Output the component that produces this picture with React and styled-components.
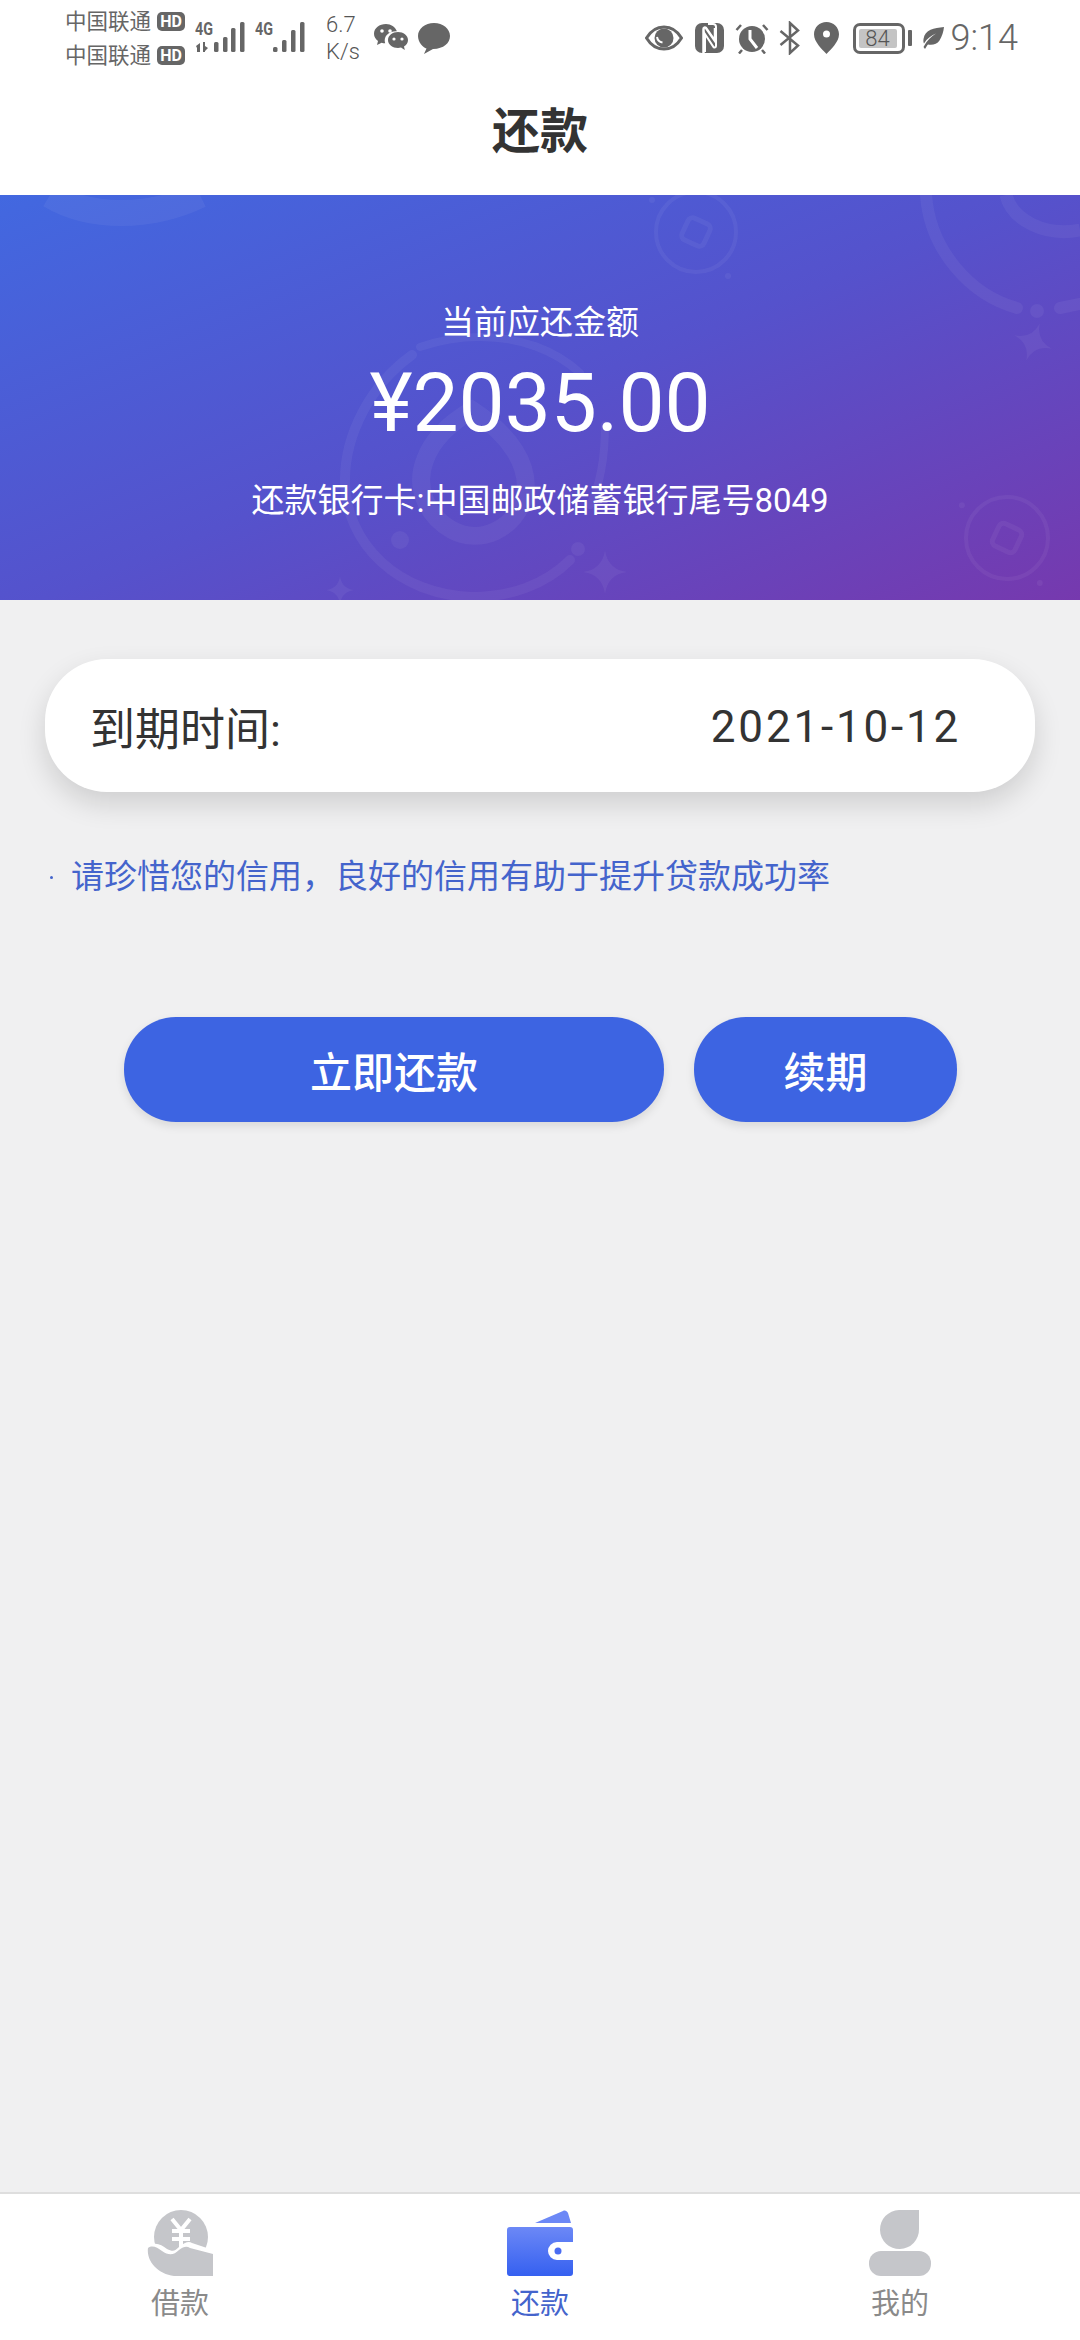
import React from 'react';
import styled, { createGlobalStyle } from 'styled-components';

const GlobalStyle = createGlobalStyle`
  html, body {
    margin: 0;
    padding: 0;
    background: #f0f0f1;
  }
  * {
    box-sizing: border-box;
  }
`;

const FONT = `Roboto, "Noto Sans CJK SC", sans-serif`;
const BLUE = '#3d64e2';
const GREY = '#666666';

const Page = styled.div`
  display: flex;
  flex-direction: column;
  width: 1080px;
  height: 2340px;
  font-family: ${FONT};
  background: #f0f0f1;
  overflow: hidden;
`;

const Header = styled.header`
  display: flex;
  flex-direction: column;
  height: 195px;
  background: #fff;
`;

const StatusBar = styled.div`
  display: flex;
  justify-content: space-between;
  align-items: center;
  height: 76px;
  padding: 0 62px 0 65px;
  color: ${GREY};
`;

const StatusGroup = styled.div`
  display: flex;
  align-items: center;
`;

const Carriers = styled.div`
  display: flex;
  flex-direction: column;
  gap: 13px;
  margin: 0 10px 0 0;
`;

const Carrier = styled.div`
  display: flex;
  align-items: center;
  gap: 6px;
  height: 21px;
  font-size: 21.5px;
  line-height: 21px;
`;

const HdBadge = styled.span`
  display: inline-flex;
  justify-content: center;
  align-items: center;
  width: 28px;
  height: 19px;
  border-radius: 5px;
  font-size: 16px;
  font-weight: 700;
  line-height: 19px;
  color: #fff;
  background: ${GREY};
`;

const Speed = styled.div`
  width: 36px;
  margin: 0 12px 0 21px;
  font-size: 22px;
  font-weight: 300;
  line-height: 27px;
  color: #555;
`;

const Clock = styled.span`
  margin-left: 7px;
  font-size: 36px;
  font-weight: 300;
  line-height: 40px;
`;

const BatteryBox = styled.div`
  display: flex;
  align-items: center;
  width: 52px;
  height: 31px;
  padding: 3px;
  margin-left: 14px;
  border: 3px solid ${GREY};
  border-radius: 7px;
`;

const BatteryLevel = styled.span`
  display: block;
  width: 38px;
  height: 19px;
  font-size: 22px;
  font-weight: 300;
  line-height: 19px;
  text-align: center;
  color: #555;
  background: #c4c4c4;
  border-radius: 2px;
`;

const BatteryNub = styled.span`
  display: block;
  width: 4px;
  height: 16px;
  margin: 0 10px 0 3px;
  border-radius: 1px;
  background: ${GREY};
`;

const StatusIcon = styled.svg`
  display: block;
  flex: none;
  margin-right: ${(p) => p.$gap || 0}px;
`;

const Title = styled.h1`
  flex: 1;
  margin: -8px 0 0;
  font-size: 48px;
  font-weight: 700;
  line-height: 127px;
  text-align: center;
  color: #333;
`;

const Banner = styled.section`
  position: relative;
  display: flex;
  flex-direction: column;
  align-items: center;
  height: 405px;
  padding-top: 106px;
  color: #fff;
  background: linear-gradient(158deg, #4268e0 0%, #5552cc 50%, #7639ae 100%);
  overflow: hidden;
`;

const BannerArt = styled.svg`
  position: absolute;
  top: 0;
  left: 0;
`;

const BannerLabel = styled.div`
  position: relative;
  font-size: 33px;
  line-height: 44px;
`;

const Amount = styled.div`
  position: relative;
  margin-top: 10px;
  font-size: 82px;
  line-height: 96px;
`;

const BankLine = styled.div`
  position: relative;
  margin-top: 28px;
  font-size: 33px;
  line-height: 44px;
`;

const Main = styled.main`
  flex: 1;
  padding: 59px 45px 0;
`;

const DueCard = styled.div`
  display: flex;
  justify-content: space-between;
  align-items: center;
  height: 133px;
  padding: 2px 74px 0 45px;
  font-size: 45px;
  color: #333;
  background: #fff;
  border-radius: 62px;
  box-shadow: 0 12px 28px rgba(0, 0, 0, 0.14);
`;

const DueDate = styled.span`
  font-size: 44px;
  letter-spacing: 2.8px;
`;

const Tip = styled.p`
  display: flex;
  align-items: center;
  gap: 18px;
  margin: 62px 0 0 5px;
  font-size: 33px;
  line-height: 46px;
  color: #4464cc;
`;

const TipDot = styled.span`
  width: 3px;
  height: 3px;
  border-radius: 50%;
  background: #4464cc;
`;

const Actions = styled.div`
  display: flex;
  gap: 30px;
  margin: 117px 0 0 79px;
`;

const ActionButton = styled.button`
  width: ${(p) => p.$width}px;
  height: 105px;
  padding: 0;
  border: 0;
  border-radius: 52px;
  font-family: ${FONT};
  font-size: 42px;
  font-weight: 500;
  color: #fff;
  background: ${BLUE};
  box-shadow: 0 4px 10px rgba(0, 0, 0, 0.1);
`;

const TabBar = styled.nav`
  display: grid;
  grid-template-columns: repeat(3, 1fr);
  height: 148px;
  padding-top: 16px;
  background: #fff;
  border-top: 2px solid #dedede;
`;

const Tab = styled.div`
  display: flex;
  flex-direction: column;
  align-items: center;
  font-size: 29px;
  line-height: 40px;
  color: ${(p) => (p.$active ? '#4464cc' : '#8a8a8a')};
`;

const TabIcon = styled.svg`
  display: block;
  margin-bottom: 8px;
`;

const Signal = ({ bars, gap, showActivity }) => (
  <StatusIcon $gap={gap} width="50" height="40" viewBox="0 0 50 40" fill={GREY}>
    <text x="0" y="17" fontFamily="Roboto" fontSize="18" fontWeight="700" textLength="18" lengthAdjust="spacingAndGlyphs">4G</text>
    {showActivity && <path d="M1 28l4-3v9H2v-4zM8 24h2v4l3 2-3 3v1H8z" />}
    {bars.map(([x, top]) => (
      <rect key={x} x={x} y={top + 4} width="4.500" height={30 - top} rx="1.500" />
    ))}
  </StatusIcon>
);

const WeChatIcon = () => (
  <StatusIcon $gap={10} width="34" height="28" viewBox="0 0 34 28" fill={GREY}>
    <path d="M12 0C5.500 0 0 4.200 0 9.700c0 3 1.600 5.500 4 7.300l-1 4 4.600-2.300c1.200.4 2.400.5 3.600.6-.3-.9-.5-1.800-.5-2.700 0-5.300 5-9.300 11-9.300h1.200C21.200 3 17 0 12 0z" />
    <path d="M34 16c0-4.600-4.700-8-10-8s-10 3.400-10 8 4.700 8 10 8c1 0 2-.1 3-.4l3.800 2.400-.8-3.500c2.500-1.500 4-3.800 4-6.500z" />
    <circle cx="8" cy="7" r="1.800" fill="#fff" />
    <circle cx="16" cy="7" r="1.800" fill="#fff" />
    <circle cx="20" cy="15" r="1.600" fill="#fff" />
    <circle cx="28" cy="15" r="1.600" fill="#fff" />
  </StatusIcon>
);

const BubbleIcon = () => (
  <StatusIcon width="32" height="31" viewBox="0 0 32 31" fill={GREY}>
    <path d="M16 0C7 0 0 5.800 0 13c0 6.300 5 11.300 8.500 12.600L6 31l9-5.100C25.500 26 32 20 32 13 32 5.800 25 0 16 0z" />
  </StatusIcon>
);

const EyeIcon = () => (
  <StatusIcon $gap={12} width="38" height="26" viewBox="0 0 38 26">
    <path d="M1.500 13C6 5.500 12 2 19 2s13 3.500 17.500 11C32 20.500 26 24 19 24S6 20.500 1.500 13z" fill="none" stroke={GREY} strokeWidth="3" />
    <circle cx="19" cy="13" r="9.500" fill={GREY} />
    <path d="M12 12c.5 3 2.500 5 5.500 5.500" fill="none" stroke="#fff" strokeWidth="2" />
  </StatusIcon>
);

const NfcIcon = () => (
  <StatusIcon $gap={11} width="29" height="30" viewBox="0 0 29 30">
    <rect width="29" height="30" rx="7" fill={GREY} />
    <path d="M8.500 30V6c0-1.500 1.500-2 2.500-1l9 13V5" fill="none" stroke="#fff" strokeWidth="2.500" />
    <path d="M13 1h5c2 0 3 1 3 3v19c0 1.500-1.500 2-2.500 1L10 11v18" fill="none" stroke="#fff" strokeWidth="2" />
  </StatusIcon>
);

const AlarmIcon = () => (
  <StatusIcon $gap={10} width="34" height="31" viewBox="0 0 34 31">
    <circle cx="17" cy="16" r="13" fill={GREY} />
    <path d="M15 7v9l7 9" fill="none" stroke="#fff" strokeWidth="3" />
    <path d="M1.500 7L6 2M32.500 7L28 2M7 27l-3 3.500M27 27l3 3.500" stroke={GREY} strokeWidth="2.500" />
  </StatusIcon>
);

const BluetoothIcon = () => (
  <StatusIcon $gap={13} width="22" height="34" viewBox="0 0 22 34">
    <path d="M1.500 10L19 24.500 11 32V2l8 7.500L1.500 24" fill="none" stroke={GREY} strokeWidth="2.500" />
  </StatusIcon>
);

const PinIcon = () => (
  <StatusIcon width="25" height="32" viewBox="0 0 25 32" fill={GREY}>
    <path fillRule="evenodd" d="M12.500 0C5.600 0 0 5.400 0 12.200 0 20 8 27 12.500 32 17 27 25 20 25 12.200 25 5.400 19.400 0 12.500 0zm0 8.500a3.500 3.500 0 1 1 0 7 3.500 3.500 0 0 1 0-7z" />
  </StatusIcon>
);

const LeafIcon = () => (
  <StatusIcon width="22" height="22" viewBox="0 0 22 22" fill={GREY}>
    <path d="M22 0C12 1 3 2.500 1.500 12c-.3 2 0 3.500.5 4.500C5 11.500 9 8.500 14 6.500 9 9.500 5 13.500 1.500 20l1.500 2c1.500-2.500 2-3.500 3-4.500 4 1 9 0 11.500-4C20 9.500 21.500 4.500 22 0z" />
  </StatusIcon>
);

const CoinArt = ({ cx, cy, r }) => (
  <g strokeWidth="4">
    <circle cx={cx} cy={cy} r={r} />
    <rect x={cx - r * 0.3} y={cy - r * 0.3} width={r * 0.6} height={r * 0.6} rx="5" transform={`rotate(25 ${cx} ${cy})`} strokeWidth="5" />
    <circle cx={cx - r * 1.1} cy={cy - r * 0.8} r="3" fill="#fff" stroke="none" />
    <circle cx={cx + r * 0.8} cy={cy + r * 1.1} r="3" fill="#fff" stroke="none" />
  </g>
);

const Sparkle = ({ x, y, s, rotate = 0 }) => (
  <path
    d={`M${x} ${y - s}Q${x + s * 0.12} ${y - s * 0.12} ${x + s} ${y}Q${x + s * 0.12} ${y + s * 0.12} ${x} ${y + s}Q${x - s * 0.12} ${y + s * 0.12} ${x - s} ${y}Q${x - s * 0.12} ${y - s * 0.12} ${x} ${y - s}z`}
    fill="#fff"
    stroke="none"
    transform={`rotate(${rotate} ${x} ${y})`}
  />
);

const BannerDecor = () => (
  <BannerArt width="1080" height="405" viewBox="0 0 1080 405" fill="none" stroke="#fff" strokeOpacity="0.05" strokeWidth="6" fillOpacity="0.05">
    <path d="M50 0C90 24 150 24 200 0" strokeWidth="26" />
    <CoinArt cx={696} cy={37} r={40} />
    <CoinArt cx={1007} cy={343} r={41} />
    <path d="M926 0C930 55 970 100 1017 113" strokeWidth="12" strokeLinecap="round" />
    <path d="M1006 0C1012 25 1045 42 1080 35" strokeWidth="13" />
    <circle cx="1037" cy="116" r="7" fill="#fff" stroke="none" />
    <path d="M1060 113L1080 109" strokeWidth="12" strokeLinecap="round" />
    <path d="M412 160C370 190 345 240 345 285C345 350 400 400 472 402C510 402 545 390 570 365" strokeWidth="10" strokeLinecap="round" />
    <path d="M420 152C440 145 460 142 480 142C520 142 555 155 580 178" strokeWidth="8" strokeLinecap="round" />
    <path d="M605 230C605 260 600 290 590 310" strokeWidth="8" strokeLinecap="round" />
    <path d="M472 215C510 240 530 270 525 300C515 335 480 350 452 335C425 320 415 290 425 265C432 245 450 228 472 215z" strokeWidth="18" />
    <circle cx="400" cy="345" r="9" fill="#fff" stroke="none" />
    <circle cx="578" cy="354" r="7" fill="#fff" stroke="none" />
    <Sparkle x={1033} y={147} s={20} rotate={20} />
    <Sparkle x={605} y={377} s={22} />
    <Sparkle x={340} y={395} s={14} />
  </BannerArt>
);

const LoanIcon = () => (
  <TabIcon width="66" height="66" viewBox="0 0 66 66">
    <circle cx="34" cy="27" r="27" fill="#c5c6ca" />
    <path d="M25 9l9 11 9-11M25 21h18M25 29h18M34 20v19" fill="none" stroke="#fff" strokeWidth="4" />
    <path d="M4 35c5-3 11 0 16 4 6 3 8 2 12-2 6-5 10-6 13-4l21 7v26H28C12 66 1 50 4 35z" fill="#fff" />
    <path d="M1 38c4-3 9-1 14 3 7 5 12 4 17-1 5-4 8-4 11-2l23 6v22H30C13 66-1 52 1 38z" fill="#c5c6ca" />
  </TabIcon>
);

const WalletIcon = () => (
  <TabIcon width="66" height="66" viewBox="0 0 66 66">
    <defs>
      <linearGradient id="walletFill" x1="0" y1="0" x2="0" y2="1">
        <stop offset="0" stopColor="#6c88f6" />
        <stop offset="1" stopColor="#3560f0" />
      </linearGradient>
    </defs>
    <path d="M28 13L56 1c2-1 4 0 5 2l3 10z" fill="#6c88f6" />
    <path d="M0 20a3 3 0 0 1 3-3h60a3 3 0 0 1 3 3v12H50a9 9 0 0 0 0 18h16v13a3 3 0 0 1-3 3H3a3 3 0 0 1-3-3z" fill="url(#walletFill)" />
    <circle cx="51" cy="41" r="3.500" fill="#4a6cf2" />
  </TabIcon>
);

const UserIcon = () => (
  <TabIcon width="62" height="66" viewBox="0 0 62 66">
    <path d="M30 0h20v19a19.500 19.500 0 1 1-20-19z" fill="#c5c6ca" />
    <rect x="0" y="41" width="62" height="25" rx="12" fill="#c5c6ca" />
  </TabIcon>
);

export default function App() {
  return (
    <Page>
      <GlobalStyle />
      <Header>
        <StatusBar>
          <StatusGroup>
            <Carriers>
              <Carrier>中国联通<HdBadge>HD</HdBadge></Carrier>
              <Carrier>中国联通<HdBadge>HD</HdBadge></Carrier>
            </Carriers>
            <Signal gap={10} showActivity bars={[[19, 20], [28, 15], [36, 6], [45, 0]]} />
            <Signal bars={[[18, 25], [27, 18], [36, 8], [45, 0]]} />
            <Speed>6.7<br />K/s</Speed>
            <WeChatIcon />
            <BubbleIcon />
          </StatusGroup>
          <StatusGroup>
            <EyeIcon />
            <NfcIcon />
            <AlarmIcon />
            <BluetoothIcon />
            <PinIcon />
            <BatteryBox><BatteryLevel>84</BatteryLevel></BatteryBox>
            <BatteryNub />
            <LeafIcon />
            <Clock>9:14</Clock>
          </StatusGroup>
        </StatusBar>
        <Title>还款</Title>
      </Header>
      <Banner>
        <BannerDecor />
        <BannerLabel>当前应还金额</BannerLabel>
        <Amount>¥2035.00</Amount>
        <BankLine>还款银行卡:中国邮政储蓄银行尾号8049</BankLine>
      </Banner>
      <Main>
        <DueCard>
          <span>到期时间:</span>
          <DueDate>2021-10-12</DueDate>
        </DueCard>
        <Tip><TipDot />请珍惜您的信用，良好的信用有助于提升贷款成功率</Tip>
        <Actions>
          <ActionButton $width={540}>立即还款</ActionButton>
          <ActionButton $width={263}>续期</ActionButton>
        </Actions>
      </Main>
      <TabBar>
        <Tab><LoanIcon />借款</Tab>
        <Tab $active><WalletIcon />还款</Tab>
        <Tab><UserIcon />我的</Tab>
      </TabBar>
    </Page>
  );
}
